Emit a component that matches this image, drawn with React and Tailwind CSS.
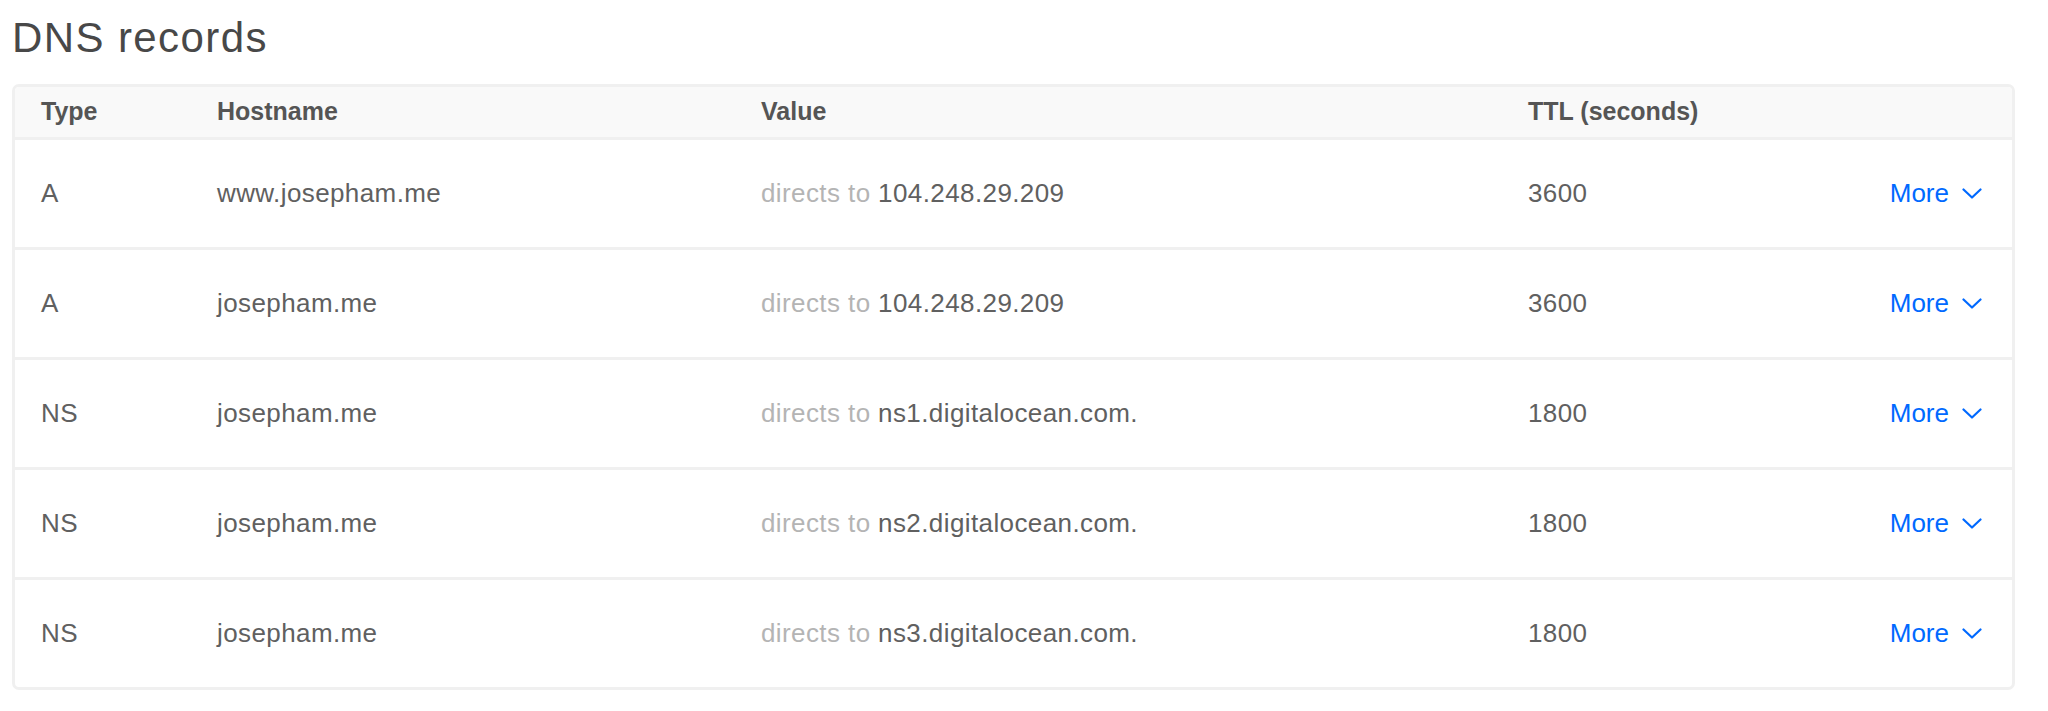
import React from "react";

const rows = [
  { type: "A", host: "www.josepham.me", value: "104.248.29.209", ttl: "3600" },
  { type: "A", host: "josepham.me", value: "104.248.29.209", ttl: "3600" },
  { type: "NS", host: "josepham.me", value: "ns1.digitalocean.com.", ttl: "1800" },
  { type: "NS", host: "josepham.me", value: "ns2.digitalocean.com.", ttl: "1800" },
  { type: "NS", host: "josepham.me", value: "ns3.digitalocean.com.", ttl: "1800" },
];

function Chevron() {
  return (
    <svg width="20" height="11" viewBox="0 0 20 11" fill="none" className="ml-[13px]">
      <path d="M1.5 1.5 L10 9.5 L18.5 1.5" stroke="#0069ff" strokeWidth="2.2" strokeLinecap="round" strokeLinejoin="round" />
    </svg>
  );
}

export default function App() {
  return (
    <div className="bg-white min-h-[711px] pt-[14px] font-['Liberation_Sans',Arial,sans-serif]">
      <h1 className="ml-[12px] text-[42px] leading-[48px] font-normal text-[#484848] tracking-[1.4px]">
        DNS records
      </h1>
      <div className="mt-[22px] ml-[12px] w-[2003px] border-[3px] border-[#f0f0f0] rounded-[7px] overflow-hidden">
        <div className="flex items-center h-[53px] bg-[#f9f9f9] border-b-[3px] border-[#f0f0f0] text-[25px] font-semibold text-[#555555]">
          <div className="w-[202px] pl-[26px]">Type</div>
          <div className="w-[544px]">Hostname</div>
          <div className="w-[767px]">Value</div>
          <div className="flex-1">TTL (seconds)</div>
        </div>
        {rows.map((r, i) => (
          <div
            key={i}
            className={
              "flex items-center text-[26px] tracking-[0.4px] text-[#606060] " +
              (i < rows.length - 1 ? "h-[110px] border-b-[3px] border-[#f0f0f0]" : "h-[107px]")
            }
          >
            <div className="w-[202px] pl-[26px]">{r.type}</div>
            <div className="w-[544px]">{r.host}</div>
            <div className="w-[767px]">
              <span className="text-[#b4b4b4]">directs to </span>
              <span>{r.value}</span>
            </div>
            <div className="flex-1">{r.ttl}</div>
            <div className="flex items-center pr-[30px] text-[#0069ff] text-[26px] tracking-normal">
              More
              <Chevron />
            </div>
          </div>
        ))}
      </div>
    </div>
  );
}
